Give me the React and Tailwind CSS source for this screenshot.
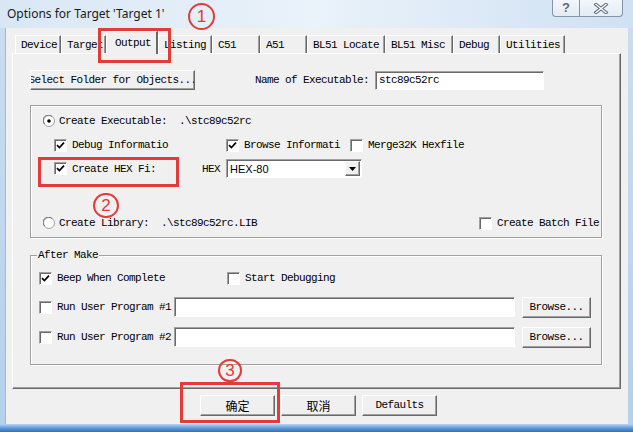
import React from "react";

const RAISED =
  "border border-t-white border-l-white border-r-[#696969] border-b-[#696969] shadow-[inset_-1px_-1px_0_#a0a0a0]";
const SUNKEN =
  "border border-t-[#a0a0a0] border-l-[#a0a0a0] border-r-white border-b-white shadow-[inset_1px_1px_0_#696969]";
const ETCHED = "border border-[#a0a0a0] shadow-[inset_1px_1px_0_#fff,1px_1px_0_#fff]";

function Check({ checked }) {
  return (
    <span className={`w-[13px] h-[13px] shrink-0 bg-white ${SUNKEN} flex items-center justify-center`}>
      {checked && (
        <svg width="9" height="9" viewBox="0 0 9 9">
          <path d="M1 4.2 L3.4 6.6 L8 1.6" fill="none" stroke="#000" strokeWidth="1.7" />
        </svg>
      )}
    </span>
  );
}

function Radio({ checked }) {
  return (
    <svg width="12" height="12" viewBox="0 0 12 12" className="shrink-0">
      <circle cx="6" cy="6" r="5.5" fill="#fff" stroke="#a0a0a0" />
      <path d="M1.6 9 A5 5 0 0 1 9 1.6" fill="none" stroke="#696969" />
      {checked && <circle cx="6" cy="6" r="1.8" fill="#000" />}
    </svg>
  );
}

function CheckLabel({ checked, children, className = "" }) {
  return (
    <div className={`flex items-center gap-[5px] ${className}`}>
      <Check checked={checked} />
      <span className="whitespace-pre">{children}</span>
    </div>
  );
}

function Btn({ children, className = "" }) {
  return (
    <div className={`bg-[#f0f0f0] ${RAISED} flex items-center justify-center overflow-hidden whitespace-nowrap ${className}`}>
      {children}
    </div>
  );
}

function Tab({ label, w, selected }) {
  if (selected) {
    return (
      <div
        className={`h-[23px] -mb-[1px] relative z-10 bg-[#f0f0f0] border-t border-l border-t-white border-l-white border-r-2 border-r-[#696969] pl-[8px] pt-[4px] leading-[14px] ${w}`}
      >
        {label}
      </div>
    );
  }
  return (
    <div
      className={`h-[18px] border-t border-l border-t-white border-l-white border-r border-r-[#696969] shadow-[inset_-1px_0_0_#a0a0a0] pl-[5px] pt-[2px] leading-[14px] ${w}`}
    >
      {label}
    </div>
  );
}

function Circle({ n, className }) {
  return (
    <div
      className={`absolute rounded-full border-2 border-[#e33a3a] flex items-center justify-center text-[#e33a3a] font-['Liberation_Sans',sans-serif] text-[17px] tracking-normal leading-none ${className}`}
    >
      {n}
    </div>
  );
}

export default function App() {
  return (
    <div className="w-[633px] h-[432px] relative overflow-hidden flex flex-col bg-[#c7dcf1] font-['Liberation_Mono',monospace] text-[11px] tracking-[-0.6px] text-black">
      {/* title bar */}
      <div className="h-[28px] shrink-0 flex items-start justify-between bg-gradient-to-r from-[#d9e7f5] via-[#eaf2fa] to-[#cfe1f3]">
        <div className="pl-[7px] pt-[5px] font-['Noto_Sans',sans-serif] text-[12px] tracking-normal text-[#1b1b1b]">
          Options for Target 'Target 1'
        </div>
        <div className="mr-[10px] flex h-[17px] w-[71px] border border-t-0 border-[#8494a6] rounded-b-[4px] bg-gradient-to-b from-[#f4f7fb] to-[#e3ebf4] overflow-hidden">
          <div className="w-[27px] h-full border-r border-[#8494a6] flex items-center justify-center font-['Liberation_Sans',sans-serif] text-[13px] font-bold tracking-normal text-[#5d6a78]">
            ?
          </div>
          <div className="flex-1 flex items-center justify-center">
            <svg width="16" height="11" viewBox="0 0 16 11">
              <path d="M3 1.5 L13 9.5 M13 1.5 L3 9.5" stroke="#5d6a78" strokeWidth="3.4" strokeLinecap="square" />
              <path d="M3 1.5 L13 9.5 M13 1.5 L3 9.5" stroke="#fff" strokeWidth="1.4" strokeLinecap="square" />
            </svg>
          </div>
        </div>
      </div>

      {/* middle */}
      <div className="flex h-[396px] shrink-0">
        <div className="w-[5px] bg-gradient-to-b from-[#c9ddf1] to-[#b5d0ec]" />
        <div className="w-[623px] bg-[#f0f0f0] border-l border-[#a8b8c8] flex flex-col">
          {/* tabs */}
          <div className="h-[25px] flex items-end pl-[9px] shrink-0">
            <Tab label="Device" w="w-[46px]" />
            <Tab label="Target" w="w-[45px]" />
            <Tab label="Output" w="w-[52px]" selected />
            <Tab label="Listing" w="w-[54px]" />
            <Tab label="C51" w="w-[48px]" />
            <Tab label="A51" w="w-[47px]" />
            <Tab label="BL51 Locate" w="w-[78px]" />
            <Tab label="BL51 Misc" w="w-[68px]" />
            <Tab label="Debug" w="w-[47px]" />
            <Tab label="Utilities" w="w-[65px]" />
          </div>

          {/* panel */}
          <div className={`ml-[6px] w-[609px] h-[336px] shrink-0 bg-[#f0f0f0] ${RAISED} pl-[17px] pt-[16px] flex flex-col`}>
            {/* row 1 */}
            <div className="flex items-center h-[20px]">
              <Btn className="w-[165px] h-[20px]">Select Folder for Objects...</Btn>
              <span className="ml-[60px] whitespace-pre">Name of Executable:</span>
              <div className={`ml-[6px] w-[169px] h-[19px] bg-white ${SUNKEN} pl-[3px] leading-[17px]`}>stc89c52rc</div>
            </div>

            {/* group 1 */}
            <div className={`mt-[15px] w-[572px] h-[133px] ${ETCHED} flex flex-col pt-[7px] leading-[16px]`}>
              <div className="h-[16px] flex items-center gap-[4px] pl-[12px]">
                <Radio checked />
                <span className="whitespace-pre">Create Executable:  .\stc89c52rc</span>
              </div>
              <div className="h-[16px] mt-[8px] flex items-center pl-[23px]">
                <CheckLabel checked className="w-[172px]">Debug Informatio</CheckLabel>
                <CheckLabel checked className="w-[124px]">Browse Informati</CheckLabel>
                <CheckLabel>Merge32K Hexfile</CheckLabel>
              </div>
              <div className="h-[19px] mt-[6px] flex items-center pl-[23px]">
                <CheckLabel checked className="w-[148px]">Create HEX Fi:</CheckLabel>
                <span>HEX</span>
                <div className={`ml-[6px] w-[136px] h-[19px] bg-white ${SUNKEN} flex items-center justify-between pl-[3px] pr-[1px]`}>
                  <span className="font-['Liberation_Sans',sans-serif] text-[11px] tracking-normal">HEX-80</span>
                  <div className={`w-[15px] h-[15px] bg-[#f0f0f0] ${RAISED} flex items-center justify-center`}>
                    <svg width="7" height="4" viewBox="0 0 7 4">
                      <path d="M0 0 H7 L3.5 4 Z" fill="#000" />
                    </svg>
                  </div>
                </div>
              </div>
              <div className="h-[16px] mt-[37px] flex items-center pl-[12px] pr-[2px]">
                <div className="flex items-center gap-[4px]">
                  <Radio />
                  <span className="whitespace-pre">Create Library:  .\stc89c52rc.LIB</span>
                </div>
                <div className="flex-1" />
                <CheckLabel>Create Batch File</CheckLabel>
              </div>
            </div>

            {/* group 2 */}
            <div className={`mt-[17px] w-[572px] h-[110px] ${ETCHED} flex flex-col leading-[16px]`}>
              <div className="-mt-[7px] ml-[6px] w-fit bg-[#f0f0f0] px-[1px] leading-[12px]">After Make</div>
              <div className="h-[16px] mt-[9px] flex items-center pl-[8px]">
                <CheckLabel checked className="w-[188px]">Beep When Complete</CheckLabel>
                <CheckLabel>Start Debugging</CheckLabel>
              </div>
              <div className="h-[20px] mt-[11px] flex items-center pl-[8px]">
                <CheckLabel className="w-[135px]">Run User Program #1</CheckLabel>
                <div className={`w-[341px] h-[20px] bg-white ${SUNKEN}`} />
                <Btn className="ml-[7px] w-[69px] h-[21px]">Browse...</Btn>
              </div>
              <div className="h-[20px] mt-[10px] flex items-center pl-[8px]">
                <CheckLabel className="w-[135px]">Run User Program #2</CheckLabel>
                <div className={`w-[341px] h-[20px] bg-white ${SUNKEN}`} />
                <Btn className="ml-[7px] w-[69px] h-[21px]">Browse...</Btn>
              </div>
            </div>
          </div>

          {/* buttons */}
          <div className="mt-[6px] pl-[194px] flex gap-[6px]">
            <Btn className="w-[75px] h-[21px] font-['Noto_Sans_CJK_SC',sans-serif] text-[12px] tracking-normal">确定</Btn>
            <Btn className="w-[75px] h-[21px] font-['Noto_Sans_CJK_SC',sans-serif] text-[12px] tracking-normal">取消</Btn>
            <Btn className="w-[75px] h-[21px]">Defaults</Btn>
          </div>
        </div>
        <div className="w-[5px] bg-gradient-to-b from-[#c9ddf1] to-[#b5d0ec]" />
      </div>

      {/* bottom frame */}
      <div className="h-[8px] shrink-0 bg-gradient-to-b from-[#b9d4ef] via-[#5f9ddb] to-[#2f6fb5]" />

      {/* annotations */}
      <div className="absolute left-[98px] top-[28px] w-[73px] h-[35px] border-[3px] border-[#e33a3a]" />
      <div className="absolute left-[38px] top-[157px] w-[141px] h-[30px] border-[3px] border-[#e33a3a]" />
      <div className="absolute left-[180px] top-[382px] w-[100px] h-[41px] border-[3px] border-[#e33a3a]" />
      <Circle n="1" className="left-[188px] top-[3px] w-[27px] h-[27px]" />
      <Circle n="2" className="left-[93px] top-[193px] w-[26px] h-[25px]" />
      <Circle n="3" className="left-[218px] top-[359px] w-[24px] h-[23px]" />
    </div>
  );
}
